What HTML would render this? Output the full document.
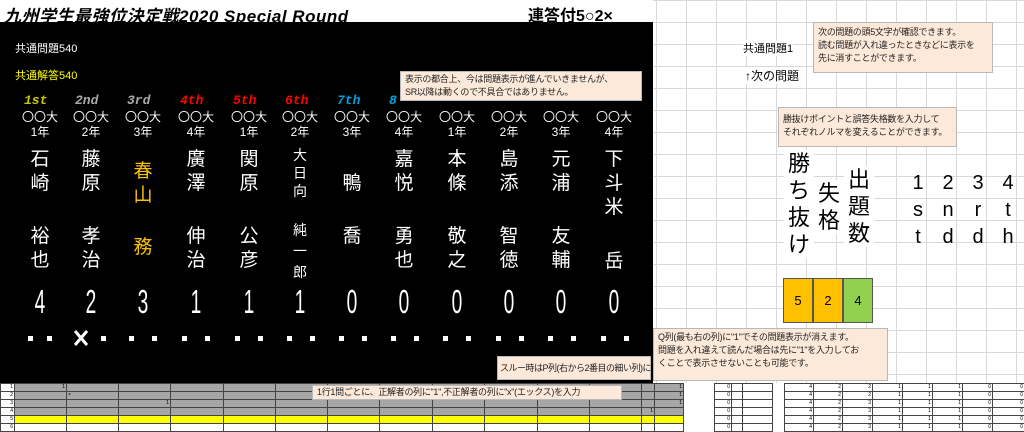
<!DOCTYPE html>
<html><head><meta charset="utf-8"><style>
*{margin:0;padding:0;box-sizing:border-box}
body{width:1024px;height:428px;overflow:hidden;background:#fff;position:relative;font-family:"Liberation Sans","Noto Sans CJK JP",sans-serif}
.a{position:absolute;white-space:nowrap}
.grid{position:absolute;left:653px;top:0;width:371px;height:383px;
background-image:linear-gradient(to right,#d8d8d8 1px,transparent 1px),linear-gradient(to bottom,#d8d8d8 1px,transparent 1px);
background-size:30px 22px;background-position:3px 0}
.blk{position:absolute;left:0;top:22px;width:653px;height:361px;background:#000}
.col{position:absolute;width:52px;text-align:center;color:#fff}
.nm{font-size:19px;line-height:24px}
.num{font-size:33px;line-height:30px;transform:scaleX(0.58)}
.box{position:absolute;background:#fde9d9;border:1px solid #b8b8b8;font-size:9px;line-height:13px;color:#222;padding:3px 5px;white-space:nowrap;letter-spacing:-0.3px;overflow:hidden}
.rk{font-size:13px;font-weight:bold;font-style:italic;font-family:"Liberation Mono",monospace}
table{border-collapse:collapse;position:absolute;table-layout:fixed}
td{border:1px solid #444;height:8px;font-size:5px;line-height:5px;text-align:right;padding:0 1px;overflow:hidden}
.g td{background:#a6a6a6}
.y td{background:#ffff00}
.big{position:absolute;font-size:22px;line-height:27px;color:#000;width:30px;text-align:center}
</style></head><body>
<div class="grid"></div>
<div class="a" style="left:0;top:0;width:653px;height:22px;background:#fff"></div>
<div class="a" style="left:4px;top:2px;font-size:17px;font-weight:bold;font-style:italic;letter-spacing:0.5px">九州学生最強位決定戦2020 Special Round</div>
<div class="a" style="left:528px;top:2px;font-size:16px;font-weight:bold">連答付5○2×</div>
<div class="blk"></div>
<div class="a" style="left:15px;top:40px;color:#fff;font-size:11px">共通問題540</div>
<div class="a" style="left:15px;top:67px;color:#ff0;font-size:11px">共通解答540</div>

<div class="a rk" style="left:24px;top:93px;color:#c8c800">1st</div>
<div class="a rk" style="left:75px;top:93px;color:#aaa">2nd</div>
<div class="a rk" style="left:127px;top:93px;color:#aaa">3rd</div>
<div class="a rk" style="left:180px;top:93px;color:#f00">4th</div>
<div class="a rk" style="left:233px;top:93px;color:#f00">5th</div>
<div class="a rk" style="left:285px;top:93px;color:#f00">6th</div>
<div class="a rk" style="left:337px;top:93px;color:#00a0e0">7th</div>
<div class="a rk" style="left:389px;top:93px;color:#00a0e0">8</div>

<div class="col" style="left:14px;top:110px;font-size:12px;line-height:15px">〇〇大<br>1年</div>
<div class="col" style="left:65px;top:110px;font-size:12px;line-height:15px">〇〇大<br>2年</div>
<div class="col" style="left:117px;top:110px;font-size:12px;line-height:15px">〇〇大<br>3年</div>
<div class="col" style="left:170px;top:110px;font-size:12px;line-height:15px">〇〇大<br>4年</div>
<div class="col" style="left:223px;top:110px;font-size:12px;line-height:15px">〇〇大<br>1年</div>
<div class="col" style="left:274px;top:110px;font-size:12px;line-height:15px">〇〇大<br>2年</div>
<div class="col" style="left:326px;top:110px;font-size:12px;line-height:15px">〇〇大<br>3年</div>
<div class="col" style="left:378px;top:110px;font-size:12px;line-height:15px">〇〇大<br>4年</div>
<div class="col" style="left:431px;top:110px;font-size:12px;line-height:15px">〇〇大<br>1年</div>
<div class="col" style="left:483px;top:110px;font-size:12px;line-height:15px">〇〇大<br>2年</div>
<div class="col" style="left:535px;top:110px;font-size:12px;line-height:15px">〇〇大<br>3年</div>
<div class="col" style="left:588px;top:110px;font-size:12px;line-height:15px">〇〇大<br>4年</div>

<div class="col nm" style="left:14px;top:148px">石<br>崎</div>
<div class="col nm" style="left:14px;top:225px">裕<br>也</div>
<div class="col nm" style="left:65px;top:148px">藤<br>原</div>
<div class="col nm" style="left:65px;top:225px">孝<br>治</div>
<div class="col nm" style="left:117px;top:160px;color:#f5c000">春<br>山</div>
<div class="col nm" style="left:117px;top:236px;color:#f5c000">務</div>
<div class="col nm" style="left:170px;top:148px">廣<br>澤</div>
<div class="col nm" style="left:170px;top:225px">伸<br>治</div>
<div class="col nm" style="left:223px;top:148px">関<br>原</div>
<div class="col nm" style="left:223px;top:225px">公<br>彦</div>
<div class="col" style="left:274px;top:146px;font-size:14px;line-height:18px">大<br>日<br>向</div>
<div class="col" style="left:274px;top:220px;font-size:14px;line-height:21px">純<br>一<br>郎</div>
<div class="col nm" style="left:326px;top:172px">鴨</div>
<div class="col nm" style="left:326px;top:225px">喬</div>
<div class="col nm" style="left:378px;top:148px">嘉<br>悦</div>
<div class="col nm" style="left:378px;top:225px">勇<br>也</div>
<div class="col nm" style="left:431px;top:148px">本<br>條</div>
<div class="col nm" style="left:431px;top:225px">敬<br>之</div>
<div class="col nm" style="left:483px;top:148px">島<br>添</div>
<div class="col nm" style="left:483px;top:225px">智<br>徳</div>
<div class="col nm" style="left:535px;top:148px">元<br>浦</div>
<div class="col nm" style="left:535px;top:225px">友<br>輔</div>
<div class="col nm" style="left:588px;top:148px">下<br>斗<br>米</div>
<div class="col nm" style="left:588px;top:250px">岳</div>

<div class="col num" style="left:14px;top:287px">4</div>
<div class="col num" style="left:65px;top:287px">2</div>
<div class="col num" style="left:117px;top:287px">3</div>
<div class="col num" style="left:170px;top:287px">1</div>
<div class="col num" style="left:223px;top:287px">1</div>
<div class="col num" style="left:274px;top:287px">1</div>
<div class="col num" style="left:326px;top:287px">0</div>
<div class="col num" style="left:378px;top:287px">0</div>
<div class="col num" style="left:431px;top:287px">0</div>
<div class="col num" style="left:483px;top:287px">0</div>
<div class="col num" style="left:535px;top:287px">0</div>
<div class="col num" style="left:588px;top:287px">0</div>

<div class="a" style="left:0;top:328px;width:653px;height:20px">
<svg width="653" height="20">
<g fill="#fff">
<rect x="28" y="8" width="5" height="5"/><rect x="47" y="8" width="5" height="5"/>
<rect x="101" y="8" width="5" height="5"/>
<rect x="129" y="8" width="5" height="5"/><rect x="152" y="8" width="5" height="5"/>
<rect x="182" y="8" width="5" height="5"/><rect x="205" y="8" width="5" height="5"/>
<rect x="235" y="8" width="5" height="5"/><rect x="258" y="8" width="5" height="5"/>
<rect x="287" y="8" width="5" height="5"/><rect x="310" y="8" width="5" height="5"/>
<rect x="339" y="8" width="5" height="5"/><rect x="362" y="8" width="5" height="5"/>
<rect x="391" y="8" width="5" height="5"/><rect x="414" y="8" width="5" height="5"/>
<rect x="443" y="8" width="5" height="5"/><rect x="466" y="8" width="5" height="5"/>
<rect x="496" y="8" width="5" height="5"/><rect x="519" y="8" width="5" height="5"/>
<rect x="548" y="8" width="5" height="5"/><rect x="571" y="8" width="5" height="5"/>
<rect x="601" y="8" width="5" height="5"/><rect x="624" y="8" width="5" height="5"/>
</g>
<path d="M75 3 L87 17 M87 3 L75 17" stroke="#fff" stroke-width="3"/>
</svg></div>

<div class="box" style="left:400px;top:71px;width:242px;height:30px;padding:1px 4px">表示の都合上、今は問題表示が進んでいきませんが、<br>SR以降は動くので不具合ではありません。</div>
<div class="box" style="left:497px;top:356px;width:154px;height:24px;line-height:16px;padding:3px 2px;letter-spacing:-0.5px">スルー時はP列(右から2番目の細い列)に"1"</div>
<div class="box" style="left:653px;top:328px;width:235px;height:53px;padding:2px 4px">Q列(最も右の列)に"1"でその問題表示が消えます。<br>問題を入れ違えて読んだ場合は先に"1"を入力してお<br>くことで表示させないことも可能です。</div>
<div class="box" style="left:813px;top:22px;width:180px;height:51px;padding:3px 4px">次の問題の頭5文字が確認できます。<br>読む問題が入れ違ったときなどに表示を<br>先に消すことができます。</div>
<div class="box" style="left:778px;top:107px;width:179px;height:40px;padding:5px 4px">勝抜けポイントと誤答失格数を入力して<br>それぞれノルマを変えることができます。</div>

<div class="a" style="left:743px;top:40px;font-size:11px;background:#fff">共通問題1</div>
<div class="a" style="left:745px;top:67px;font-size:12px;background:#fff">↑次の問題</div>

<div class="big" style="left:784px;top:150px;background:#fff">勝<br>ち<br>抜<br>け</div>
<div class="big" style="left:814px;top:180px;background:#fff">失<br>格</div>
<div class="big" style="left:844px;top:166px;background:#fff">出<br>題<br>数</div>
<div class="big" style="left:903px;top:170px;font-size:20px;line-height:27px">1<br>s<br>t</div>
<div class="big" style="left:933px;top:170px;font-size:20px;line-height:27px">2<br>n<br>d</div>
<div class="big" style="left:963px;top:170px;font-size:20px;line-height:27px">3<br>r<br>d</div>
<div class="big" style="left:993px;top:170px;font-size:20px;line-height:27px">4<br>t<br>h</div>
<div class="a" style="left:783px;top:278px;width:30px;height:45px;background:#ffc000;border:1px solid #555;font-size:13px;text-align:center;line-height:43px">5</div>
<div class="a" style="left:813px;top:278px;width:30px;height:45px;background:#ffc000;border:1px solid #555;font-size:13px;text-align:center;line-height:43px">2</div>
<div class="a" style="left:843px;top:278px;width:30px;height:45px;background:#92d050;border:1px solid #555;font-size:13px;text-align:center;line-height:43px">4</div>

<div class="a" style="left:0;top:383px;width:1024px;height:45px;background:#fff"></div>
<table style="left:0;top:383px;width:684px">
<colgroup><col style="width:14px"><col style="width:52px"><col style="width:52px"><col style="width:52px"><col style="width:53px"><col style="width:52px"><col style="width:52px"><col style="width:52px"><col style="width:53px"><col style="width:52px"><col style="width:53px"><col style="width:52px"><col style="width:52px"><col style="width:13px"><col style="width:29px"></colgroup>
<tr class="g"><td style="background:#fff">1</td><td>1</td><td></td><td></td><td></td><td></td><td></td><td></td><td></td><td></td><td></td><td></td><td></td><td></td><td>1</td></tr>
<tr class="g"><td style="background:#fff">2</td><td></td><td style="text-align:left">×</td><td></td><td></td><td></td><td></td><td></td><td></td><td></td><td></td><td></td><td></td><td></td><td>1</td></tr>
<tr class="g"><td style="background:#fff">3</td><td></td><td></td><td>1</td><td></td><td></td><td></td><td></td><td></td><td></td><td></td><td></td><td></td><td></td><td>1</td></tr>
<tr class="g"><td style="background:#fff">4</td><td></td><td></td><td></td><td></td><td></td><td></td><td></td><td></td><td></td><td></td><td></td><td></td><td>1</td><td></td></tr>
<tr class="y"><td style="background:#fff">5</td><td></td><td></td><td></td><td></td><td></td><td></td><td></td><td></td><td></td><td></td><td></td><td></td><td></td><td></td></tr>
<tr><td>6</td><td></td><td></td><td></td><td></td><td></td><td></td><td></td><td></td><td></td><td></td><td></td><td></td><td></td><td></td></tr>
</table>
<table style="left:714px;top:383px;width:58px">
<colgroup><col style="width:17px"><col style="width:11px"><col style="width:30px"></colgroup>
<tr><td>0</td><td></td><td></td></tr><tr><td>0</td><td></td><td></td></tr><tr><td>0</td><td></td><td></td></tr><tr><td>0</td><td></td><td></td></tr><tr><td>0</td><td></td><td></td></tr><tr><td>0</td><td></td><td></td></tr>
</table>
<table style="left:784px;top:383px;width:240px">
<colgroup><col style="width:29px"><col style="width:29px"><col style="width:30px"><col style="width:30px"><col style="width:30px"><col style="width:30px"><col style="width:30px"><col style="width:32px"></colgroup>
<tr><td>4</td><td>2</td><td>2</td><td>1</td><td>1</td><td>1</td><td>0</td><td>0</td></tr>
<tr><td>4</td><td>2</td><td>2</td><td>1</td><td>1</td><td>1</td><td>0</td><td>0</td></tr>
<tr><td>4</td><td>2</td><td>3</td><td>1</td><td>1</td><td>1</td><td>0</td><td>0</td></tr>
<tr><td>4</td><td>2</td><td>3</td><td>1</td><td>1</td><td>1</td><td>0</td><td>0</td></tr>
<tr><td>4</td><td>2</td><td>3</td><td>1</td><td>1</td><td>1</td><td>0</td><td>0</td></tr>
<tr><td>4</td><td>2</td><td>3</td><td>1</td><td>1</td><td>1</td><td>0</td><td>0</td></tr>
</table>
<div class="box" style="left:312px;top:385px;width:310px;height:15px;font-size:9px;line-height:13px;padding:0 4px">1行1問ごとに、正解者の列に"1",不正解者の列に"x"(エックス)を入力</div>
</body></html>
